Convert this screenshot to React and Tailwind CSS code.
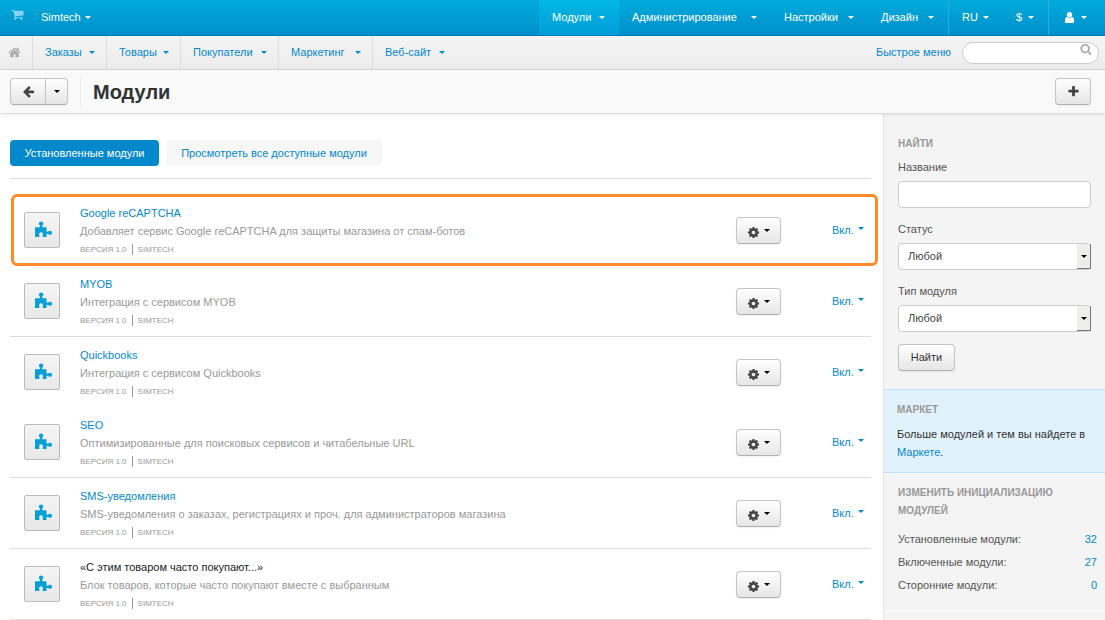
const PATHS = {
  plus: "M1600 736v192q0 40-28 68t-68 28h-416v416q0 40-28 68t-68 28h-192q-40 0-68-28t-28-68v-416h-416q-40 0-68-28t-28-68v-192q0-40 28-68t68-28h416v-416q0-40 28-68t68-28h192q40 0 68 28t28 68v416h416q40 0 68 28t28 68z",
  cog: "M1152 896q0-106-75-181t-181-75-181 75-75 181 75 181 181 75 181-75 75-181zm512-109v222q0 12-8 23t-20 13l-185 28q-19 54-39 91 35 50 107 138 10 12 10 25t-9 23q-27 37-99 108t-94 71q-12 0-26-9l-138-108q-44 23-91 38-16 136-29 186-7 28-36 28h-222q-14 0-24.5-8.5t-11.5-21.5l-28-184q-49-16-90-37l-141 107q-10 9-25 9-14 0-25-11-126-114-165-168-7-10-7-23 0-12 8-23 15-21 51-66.5t54-70.5q-27-50-41-99l-183-27q-13-2-21-12.5t-8-23.5v-222q0-12 8-23t19-13l186-28q14-46 39-92-40-57-107-138-10-12-10-24 0-10 9-23 26-36 98.5-107.5t94.5-71.5q13 0 26 10l138 107q44-23 91-38 16-136 29-186 7-28 36-28h222q14 0 24.5 8.5t11.5 21.5l28 184q49 16 90 37l142-107q9-9 24-9 13 0 25 10 129 119 165 170 7 8 7 22 0 12-8 23-15 21-51 66.5t-54 70.5q26 50 41 98l183 28q13 2 21 12.5t8 23.5z",
  home: "M1472 992v480q0 26-19 45t-45 19h-384v-384h-256v384h-384q-26 0-45-19t-19-45v-480q0-1 .5-3t.5-3l575-474 575 474q1 2 1 6zm223-69l-62 74q-8 9-21 11h-3q-13 0-21-7l-692-577-692 577q-12 8-24 7-13-2-21-11l-62-74q-8-10-7-23.5t11-21.5l719-599q32-26 76-26t76 26l244 204v-195q0-14 9-23t23-9h192q14 0 23 9t9 23v408l219 182q10 8 11 21.5t-7 23.5z",
  search: "M1216 832q0-185-131.5-316.5t-316.5-131.5-316.5 131.5-131.5 316.5 131.5 316.5 316.5 131.5 316.5-131.5 131.5-316.5zm512 832q0 52-38 90t-90 38q-54 0-90-38l-343-342q-179 124-399 124-143 0-273.5-55.5t-225-150-150-225-55.5-273.5 55.5-273.5 150-225 225-150 273.5-55.5 273.5 55.5 225 150 150 225 55.5 273.5q0 220-124 399l343 343q37 37 37 90z",
  user: "M1536 1399q0 109-62.5 187t-150.5 78h-854q-88 0-150.5-78t-62.5-187q0-85 8.5-160.5t31.5-152 58.5-131 94-89 134.5-34.5q131 128 313 128t313-128q76 0 134.5 34.5t94 89 58.5 131 31.5 152 8.5 160.5zm-256-887q0 159-112.5 271.5t-271.5 112.5-271.5-112.5-112.5-271.5 112.5-271.5 271.5-112.5 271.5 112.5 112.5 271.5z",
  back: "M1664 896v128q0 53-32.5 90.5t-84.5 37.5h-704l293 294q38 36 38 90t-38 90l-75 76q-37 37-90 37-52 0-91-37l-651-652q-37-37-37-90 0-52 37-91l651-650q38-38 91-38 52 0 90 38l75 74q38 38 38 91t-38 91l-293 293h704q52 0 84.5 37.5t32.5 90.5z",
  cart: "M704 1536q0 52-38 90t-90 38-90-38-38-90 38-90 90-38 90 38 38 90zm896 0q0 52-38 90t-90 38-90-38-38-90 38-90 90-38 90 38 38 90zm128-1088v512q0 24-16.5 42.5t-40.5 21.5l-1044 122q13 60 13 70 0 16-24 64h920q26 0 45 19t19 45-19 45-45 19h-1024q-26 0-45-19t-19-45q0-11 8-31.5t16-36 21.5-40 15.5-29.5l-177-823h-204q-26 0-45-19t-19-45 19-45 45-19h256q16 0 28.5 6.500t19.5 15.5 13 24.5 8 26 5.5 29.5 4.500 26h1201q26 0 45 19t19 45z",
};

function Icon({ name, className }) {
  return (
    <svg viewBox="0 0 1792 1792" fill="currentColor" aria-hidden="true" className={className}>
      <path d={PATHS[name]} />
    </svg>
  );
}

function Puzzle() {
  return (
    <svg viewBox="0 0 20 20" fill="currentColor" aria-hidden="true" className="size-5 text-[#08a0d4]">
      <path d="M3 7.300H7.200Q8.300 7.200 8 6.100L7.500 5A2.100 2.100 0 1 1 10.700 5L10.200 6.100Q9.900 7.200 11 7.300H14.500V10.800Q14.600 12 15.600 11.700L17 11A2.050 2.050 0 1 1 17 14.600L15.600 13.900Q14.600 13.700 14.500 14.800V17H11Q10.400 16.700 10.700 15.500Q11.600 12.300 9 12.200Q6.500 12.300 7.400 15.500Q7.700 16.700 7 17H3Z" />
    </svg>
  );
}

function Caret({ className = "" }) {
  return (
    <svg viewBox="0 0 6 3" fill="currentColor" aria-hidden="true" className={`h-[3px] w-[6px] shrink-0 ${className}`}>
      <path d="M0 0h6L3 3z" />
    </svg>
  );
}

const BTN =
  "flex items-center justify-center border border-[#c5c5c5] border-b-[#b0b0b0] bg-linear-to-b from-white to-[#e6e6e6] text-[#333] shadow-[0_1px_2px_rgba(0,0,0,0.06)]";

const TOP = [
  { label: "Модули", size: "min-w-20 bg-linear-to-b from-[#02b7e3] to-[#029dd9]" },
  { label: "Администрирование", size: "min-w-[152px]" },
  { label: "Настройки", size: "min-w-[97px]" },
  { label: "Дизайн", size: "min-w-20" },
];

const NAV = [
  { label: "Заказы", size: "min-w-[74px]" },
  { label: "Товары", size: "min-w-[74px]" },
  { label: "Покупатели", size: "min-w-[98px]" },
  { label: "Маркетинг", size: "min-w-[94px]" },
  { label: "Веб-сайт", size: "min-w-[84px]" },
];

const MODULES = [
  { name: "Google reCAPTCHA", text: "Добавляет сервис Google reCAPTCHA для защиты магазина от спам-ботов", marked: true },
  { name: "MYOB", text: "Интеграция с сервисом MYOB", line: true },
  { name: "Quickbooks", text: "Интеграция с сервисом Quickbooks" },
  { name: "SEO", text: "Оптимизированные для поисковых сервисов и читабельные URL", line: true },
  { name: "SMS-уведомления", text: "SMS-уведомления о заказах, регистрациях и проч. для администраторов магазина", line: true },
  { name: "«С этим товаром часто покупают...»", text: "Блок товаров, которые часто покупают вместе с выбранным", line: true, plain: true },
];

const COUNTS = [
  ["Установленные модули:", 32],
  ["Включенные модули:", 27],
  ["Сторонние модули:", 0],
];

function ModuleRow({ item }) {
  const frame = item.marked
    ? "-mr-[7px] ml-px h-[72px] rounded-md border-3 border-[#ff8a29] pr-[11px] pl-[10px]"
    : item.line
      ? "h-[71px] border-b border-[#ddd] pr-[7px] pl-[14px]"
      : "h-[70px] pr-[7px] pl-[14px]";
  return (
    <li className={`flex items-center ${frame}`}>
      <div className="flex size-9 shrink-0 items-center justify-center rounded-xs border border-[#bbb] bg-linear-to-b from-[#f5f5f5] to-[#e8e8e8]">
        <Puzzle />
      </div>
      <div className="ml-5 min-w-0 flex-1 pb-0.5">
        <h2 className="leading-[18px]">
          {item.plain ? item.name : <a href="#" className="text-[#0388cc]">{item.name}</a>}
        </h2>
        <p className="leading-[18px] text-[#999]">{item.text}</p>
        <div className="flex items-center pt-1 text-[8px] text-[#999] uppercase">
          <span className="mr-[5px] border-r border-[#999] pr-[5px] leading-[11px]">Версия 1.0</span>
          <span className="leading-[11px]">Simtech</span>
        </div>
      </div>
      <button type="button" aria-label="Действия" className={`${BTN} h-[27px] w-[45px] gap-1 rounded`}>
        <Icon name="cog" className="mt-1 size-[13px] text-[#444]" />
        <Caret className="text-black" />
      </button>
      <button type="button" className="ml-[51px] flex w-8 items-center justify-between text-[#0388cc]">
        Вкл. <Caret className="mb-1" />
      </button>
    </li>
  );
}

function SelectField({ id, label }) {
  return (
    <div className="flex flex-col">
      <label htmlFor={id} className="mb-[5px] leading-[18px]">{label}</label>
      <div className="relative">
        <select id={id} className="block h-[27px] w-full appearance-none rounded border border-[#ccc] bg-white pr-6 pl-[9px] text-[#444]">
          <option>Любой</option>
        </select>
        <span className="pointer-events-none absolute top-px right-0 bottom-px flex w-[14px] items-center justify-center border-r border-b border-[#777] bg-[#efeeec] text-black">
          <Caret />
        </span>
      </div>
    </div>
  );
}

export default function App() {
  return (
    <div className="flex min-h-screen flex-col bg-white font-['Liberation_Sans',Arial,sans-serif] text-[11px] text-[#222]">
      <header className="flex h-9 items-stretch border-b border-[#0078b0] bg-linear-to-b from-[#02abda] to-[#028fcb] text-white">
        <a href="#" aria-label="Витрина" className="ml-[11px] pt-2 text-[#86d3ef]">
          <Icon name="cart" className="size-[13px]" />
        </a>
        <button type="button" className="ml-[17px] flex items-center gap-1">
          Simtech <Caret />
        </button>
        <nav className="ml-auto flex items-stretch">
          {TOP.map((t) => (
            <button key={t.label} type="button" className={`flex items-center justify-between gap-1 pr-[14px] pl-[13px] ${t.size}`}>
              {t.label} <Caret />
            </button>
          ))}
          <button type="button" className="flex items-center gap-[5px] border-l border-[#35a9df] px-[13px]">
            RU <Caret />
          </button>
          <button type="button" className="flex items-center gap-[6px] px-[14px]">
            $ <Caret />
          </button>
          <button type="button" aria-label="Аккаунт" className="flex items-center gap-[5px] border-l border-[#35a9df] pr-[18px] pl-[14px]">
            <Icon name="user" className="size-[13px]" /> <Caret />
          </button>
        </nav>
      </header>

      <div className="flex h-[34px] items-stretch border-b border-[#d8d8d8] bg-linear-to-b from-[#f5f5f5] to-[#ececec] text-[#0388cc]">
        <a href="#" aria-label="Главная" className="flex w-8 items-center pl-2 text-[#aaa]">
          <Icon name="home" className="size-[13px]" />
        </a>
        {NAV.map((t) => (
          <button
            key={t.label}
            type="button"
            className={`flex items-center justify-between gap-1 border-l border-[#dedede] pr-[11px] pl-3 ${t.size}`}
          >
            {t.label} <Caret />
          </button>
        ))}
        <div className="ml-auto flex items-center gap-[11px] pr-[6px]">
          <a href="#">Быстрое меню</a>
          <div className="relative">
            <input aria-label="Поиск" className="block h-[22px] w-[137px] rounded-full border border-[#ccc] bg-white px-3" />
            <Icon name="search" className="pointer-events-none absolute top-px right-[7px] size-3 text-[#aaa]" />
          </div>
        </div>
      </div>

      <div className="z-10 flex h-11 items-center border-b border-[#ddd] bg-[#f9f9f9] pr-[14px] pl-[10px] shadow-[0_1px_4px_rgba(0,0,0,0.08)]">
        <div className="flex">
          <button type="button" aria-label="Назад" className={`${BTN} h-[27px] w-9 rounded-l`}>
            <Icon name="back" className="size-[13px] text-[#444]" />
          </button>
          <button type="button" aria-label="Недавние страницы" className={`${BTN} -ml-px h-[27px] w-[23px] rounded-r`}>
            <Caret className="text-black" />
          </button>
        </div>
        <h1 className="ml-3 border-l border-[#eee] pl-3 text-[20px] leading-[30px] font-bold text-[#333]">Модули</h1>
        <button type="button" aria-label="Добавить" className={`${BTN} ml-auto h-[27px] w-9 rounded`}>
          <Icon name="plus" className="size-[13px] text-[#444]" />
        </button>
      </div>

      <div className="flex flex-1 items-stretch">
        <main className="min-w-0 flex-1 pt-[26px] pr-3 pl-[10px]">
          <div className="flex gap-[7px] border-b border-[#ddd] pb-3">
            <a href="#" className="flex h-[26px] min-w-[149px] items-center justify-center rounded bg-[#0388cc] px-[11px] text-white">
              Установленные модули
            </a>
            <a href="#" className="flex h-[26px] min-w-[216px] items-center justify-center rounded bg-[#f7f7f7] px-[11px] text-[#0388cc]">
              Просмотреть все доступные модули
            </a>
          </div>
          <ul className="pt-[15px]">
            {MODULES.map((m) => (
              <ModuleRow key={m.name} item={m} />
            ))}
          </ul>
        </main>

        <aside className="w-[222px] shrink-0 border-l border-[#e5e5e5] bg-[#f4f4f4] text-[#555]">
          <form className="flex flex-col gap-3 px-[14px] pt-[21px] pb-[18px]">
            <div className="flex flex-col">
              <h2 className="mb-[5px] text-[10px] leading-[18px] font-bold text-[#999] uppercase">Найти</h2>
              <label htmlFor="name" className="mb-[5px] leading-[18px]">Название</label>
              <input id="name" className="h-[27px] rounded border border-[#ccc] bg-white px-[9px]" />
            </div>
            <SelectField id="status" label="Статус" />
            <SelectField id="type" label="Тип модуля" />
            <button type="button" className={`${BTN} h-[27px] min-w-[57px] self-start rounded px-[11px]`}>Найти</button>
          </form>
          <section className="border-y border-[#bfe0f5] bg-[#e1f2fc] px-[13px] pt-[11px] pb-[11px] leading-[18px] text-[#333]">
            <h2 className="mb-[6px] text-[10px] leading-[18px] font-bold text-[#999] uppercase">Маркет</h2>
            <p>
              Больше модулей и тем вы найдете в <a href="#" className="text-[#0388cc]">Маркете</a>.
            </p>
          </section>
          <section className="border-b border-white pt-[11px] pr-2 pb-[14px] pl-[14px]">
            <h2 className="mb-2 text-[10px] leading-[18px] font-bold text-[#999] uppercase">Изменить инициализацию модулей</h2>
            <ul>
              {COUNTS.map(([label, n]) => (
                <li key={label} className="flex justify-between leading-[23px]">
                  <span>{label}</span>
                  <a href="#" className="text-[#0388cc]">{n}</a>
                </li>
              ))}
            </ul>
          </section>
        </aside>
      </div>
    </div>
  );
}
